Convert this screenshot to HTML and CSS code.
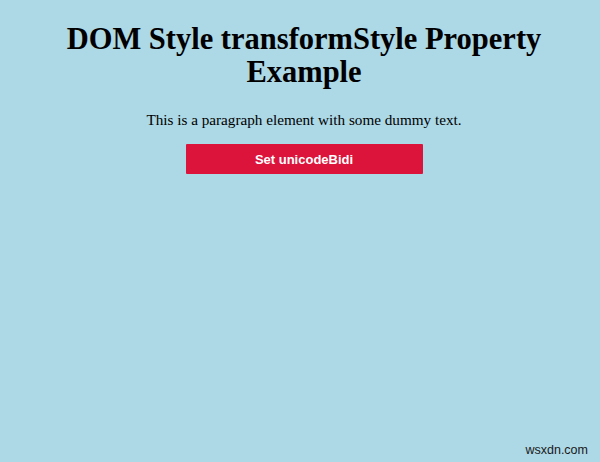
FILE: index.html
```html
<!DOCTYPE html>
<html>
<head>
<meta charset="utf-8">
<link rel="stylesheet" href="styles.css">
</head>
<body>
<main class="page">
  <h1 class="title">DOM Style transformStyle Property Example</h1>
  <p class="text">This is a paragraph element with some dummy text.</p>
  <button class="btn">Set unicodeBidi</button>
</main>
<div class="mark">wsxdn.com</div>
</body>
</html>
```
FILE: styles.css
```css
html, body {
  margin: 0;
  height: 100%;
}
body {
  background: #add8e6;
  font-family: "Liberation Serif", "Times New Roman", serif;
  color: #000;
  position: relative;
  overflow: hidden;
}
.page {
  display: flex;
  flex-direction: column;
  align-items: center;
  text-align: center;
  padding: 23px 40px 0 48px;
}
.title {
  margin: 0;
  font-size: 30.5px;
  line-height: 33px;
  font-weight: bold;
  width: 500px;
}
.text {
  margin: 22px 0 0;
  font-size: 15.2px;
  line-height: 18px;
}
.btn {
  margin-top: 15px;
  width: 237px;
  height: 30px;
  border: none;
  border-radius: 1px;
  background: #dc143c;
  color: #fff;
  font-family: "Liberation Sans", Arial, sans-serif;
  font-size: 13px;
  font-weight: bold;
}
.mark {
  position: absolute;
  right: 12px;
  bottom: 5px;
  font-family: "Liberation Sans", Arial, sans-serif;
  font-size: 12.5px;
  color: #1a1a1a;
}
```
